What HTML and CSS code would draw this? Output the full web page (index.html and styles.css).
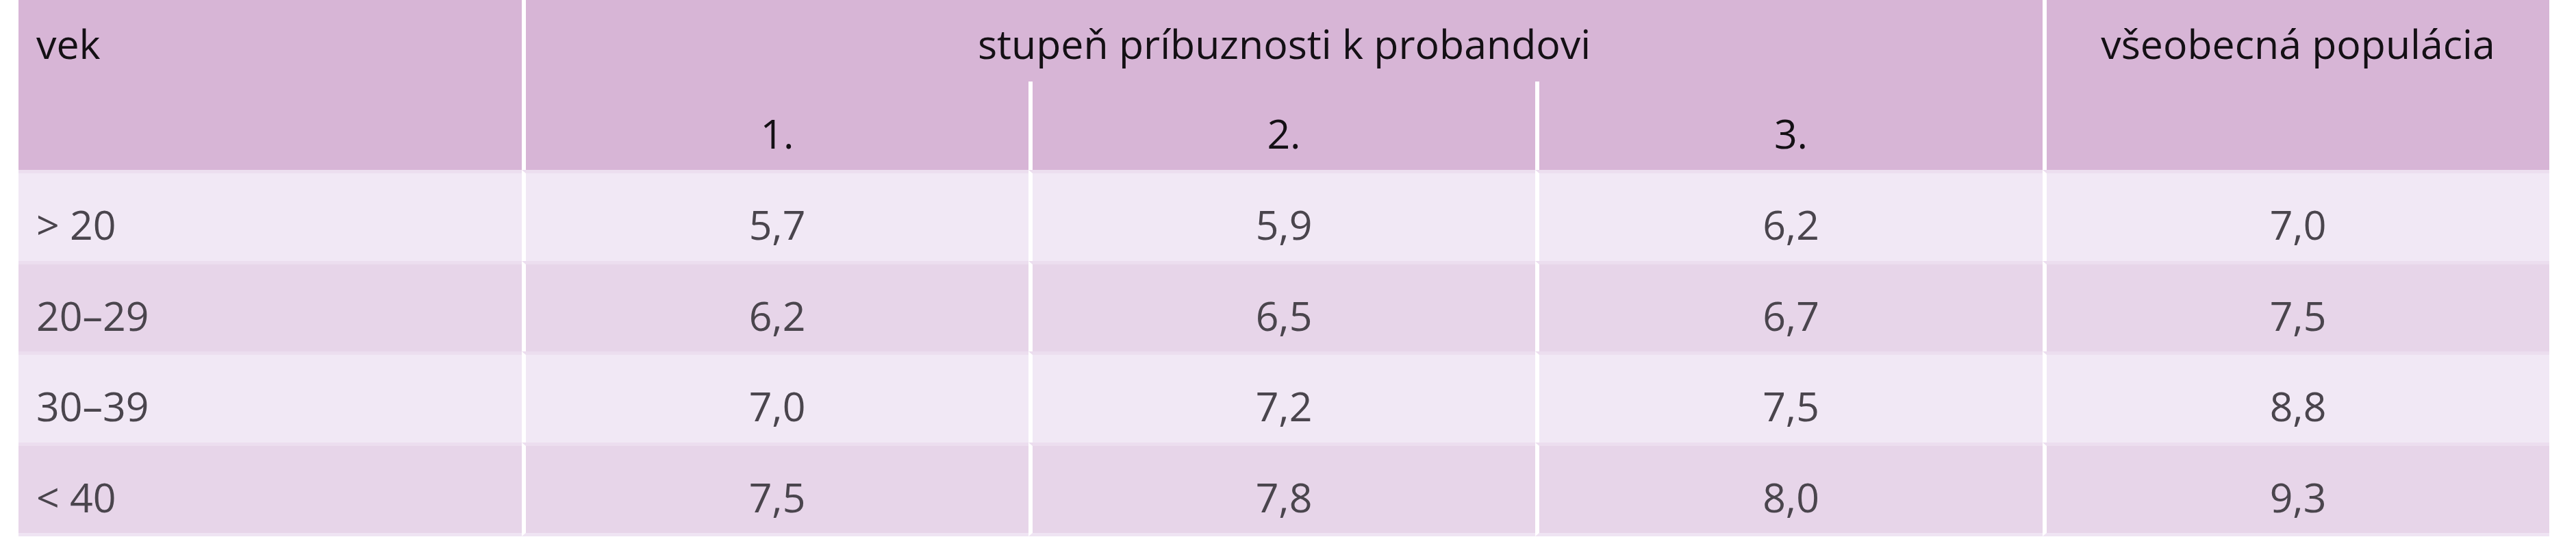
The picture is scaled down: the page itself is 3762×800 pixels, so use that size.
FILE: index.html
```html
<!DOCTYPE html>
<html lang="sk">
<head>
<meta charset="utf-8">
<title>Tabuľka</title>
<link rel="stylesheet" href="styles.css">
</head>
<body>
<table class="data">
  <colgroup>
    <col class="c-age">
    <col class="c-n">
    <col class="c-n">
    <col class="c-n3">
    <col class="c-n">
  </colgroup>
  <thead>
    <tr class="h1">
      <th rowspan="2" class="age span">vek</th>
      <th colspan="3" class="sep">stupeň príbuznosti k probandovi</th>
      <th rowspan="2" class="sep span">všeobecná populácia</th>
    </tr>
    <tr class="h2">
      <th class="sep">1.</th>
      <th class="sep">2.</th>
      <th class="sep">3.</th>
    </tr>
  </thead>
  <tbody>
    <tr class="light">
      <td class="age">&gt; 20</td>
      <td class="sep">5,7</td>
      <td class="sep">5,9</td>
      <td class="sep">6,2</td>
      <td class="sep">7,0</td>
    </tr>
    <tr class="dark">
      <td class="age">20–29</td>
      <td class="sep">6,2</td>
      <td class="sep">6,5</td>
      <td class="sep">6,7</td>
      <td class="sep">7,5</td>
    </tr>
    <tr class="light">
      <td class="age">30–39</td>
      <td class="sep">7,0</td>
      <td class="sep">7,2</td>
      <td class="sep">7,5</td>
      <td class="sep">8,8</td>
    </tr>
    <tr class="dark last">
      <td class="age">&lt; 40</td>
      <td class="sep">7,5</td>
      <td class="sep">7,8</td>
      <td class="sep">8,0</td>
      <td class="sep">9,3</td>
    </tr>
  </tbody>
</table>
</body>
</html>
```

FILE: styles.css
```css
html, body {
  margin: 0;
  padding: 0;
  background: #ffffff;
}

body {
  font-family: "Open Sans", "Noto Sans", "DejaVu Sans", sans-serif;
  font-size: 59px;
  line-height: 79px;
}

.data {
  margin: 0 0 0 27px;
  width: 3696px;
  table-layout: fixed;
  border-collapse: separate;
  border-spacing: 0;
}

.c-age { width: 735px; }
.c-n { width: 740px; }
.c-n3 { width: 741px; }

.data th,
.data td {
  text-align: center;
  font-weight: 400;
  padding-left: 26px;
  padding-right: 26px;
  white-space: nowrap;
}

.data th {
  background: #d7b5d6;
  color: #141015;
  vertical-align: top;
}

.data .sep {
  border-left: 6px solid #ffffff;
}

.data .age {
  text-align: left;
}

.h1 th {
  padding-top: 24px;
  padding-bottom: 16px;
}

.h1 th.span {
  padding-bottom: 0;
}

.h2 th {
  padding-top: 36px;
  padding-bottom: 14px;
}

.data td {
  color: #4a454d;
  border-top: 5px solid #ecdeef;
  padding-top: 35px;
  padding-bottom: 13.5px;
  vertical-align: top;
}

.light td { background: #f1e8f5; }
.dark td { background: #e7d5e9; }

.last td {
  border-bottom: 5px solid #efe4f3;
}
```
